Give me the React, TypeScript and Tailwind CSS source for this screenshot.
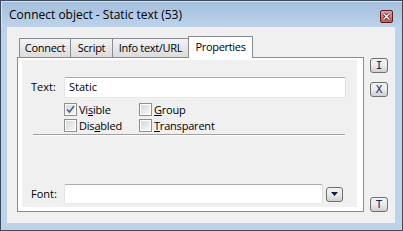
import React from 'react';

const ui = "font-['Segoe_UI','Open_Sans',sans-serif]";

function SideButton({ letter }: { letter: string }) {
    return (
        <div className="w-[18px] h-[15px] rounded-[3px] border border-[#707070] bg-gradient-to-b from-[#f2f2f2] via-[#ebebeb] to-[#cfcfcf] flex items-center justify-center text-[11px] leading-none text-[#1a2a5a] font-['DejaVu_Sans_Mono',monospace]">
            {letter}
        </div>
    );
}

function CheckBox({ checked, pre, key_, post }: { checked?: boolean; pre: string; key_: string; post: string }) {
    return (
        <div className="flex items-center gap-[2px] h-[16px]">
            <div className="w-[13px] h-[13px] border border-[#8e8f8f] bg-white p-px">
                <div className="w-full h-full bg-gradient-to-br from-[#d8d8d8] to-[#f6f6f6] flex items-center justify-center">
                    {checked && (
                        <svg width="9" height="9" viewBox="0 0 9 9">
                            <path d="M1 4.5 L3.5 7 L8 1" fill="none" stroke="#4a5e96" strokeWidth="1.6" />
                        </svg>
                    )}
                </div>
            </div>
            <span className="text-[11px] text-black leading-none tracking-[-0.2px]">
                {pre}<span className="underline underline-offset-1">{key_}</span>{post}
            </span>
        </div>
    );
}

const tabs = [
    { label: 'Connect', w: 'w-[52px]' },
    { label: 'Script', w: 'w-[43px]' },
    { label: 'Info text/URL', w: 'w-[77px]' },
];

export default function App() {
    return (
        <div className={`w-[403px] h-[231px] border border-[#3c4a5a] bg-[#bcd3ea] flex flex-col ${ui}`}>
            {/* Title bar */}
            <div className="h-[26px] shrink-0 bg-gradient-to-b from-[#a4bfdc] to-[#bcd3eb] border-t border-l border-[#d5e3f2] flex items-center justify-between pl-[7px] pr-[9px]">
                <span className="text-[12px] text-black pt-[1px]">Connect object - Static text (53)</span>
                <div className="w-[13px] h-[13px] rounded-[2px] border border-[#5b1d1d] bg-gradient-to-b from-[#e8a0a0] to-[#c75454] flex items-center justify-center mt-[3px]">
                    <svg width="9" height="9" viewBox="0 0 9 9">
                        <path d="M1.5 1.5 L7.5 7.5 M7.5 1.5 L1.5 7.5" stroke="#4a1515" strokeWidth="3" />
                        <path d="M1.5 1.5 L7.5 7.5 M7.5 1.5 L1.5 7.5" stroke="#ffffff" strokeWidth="1.5" />
                    </svg>
                </div>
            </div>

            {/* Client area */}
            <div className="mx-[6px] mr-[7px] h-[196px] bg-[#f0f0f0] flex pl-[10px] pt-[9px]">
                {/* Tab control */}
                <div className="w-[347px] flex flex-col">
                    <div className="flex items-end h-[21px] pl-[2px] tracking-[-0.3px]">
                        {tabs.map((t) => (
                            <div
                                key={t.label}
                                className={`${t.w} h-[19px] -mr-px border border-b-0 border-[#898c95] bg-gradient-to-b from-[#f3f3f3] to-[#dcdcdc] flex items-center justify-center text-[11px] text-black`}
                            >
                                {t.label}
                            </div>
                        ))}
                        <div className="w-[65px] h-[22px] -mb-px relative z-10 border border-b-0 border-[#898c95] bg-white flex items-center justify-center text-[11px] text-black">
                            Properties
                        </div>
                    </div>
                    <div className="h-[155px] border border-[#898c95] bg-white pt-[2px] pl-[4px] pr-[6px] pb-[4px]">
                        <div className="h-full bg-[#f0f0f0] flex flex-col">
                            <div className="flex items-center mt-[17px] h-[21px]">
                                <span className="w-[42px] pl-[9px] text-[11px] text-black">Text:</span>
                                <div className="w-[282px] h-[21px] rounded-[2px] border border-[#abadb3] border-l-[#e2e3ea] border-r-[#dbdfe6] border-b-[#e3e9ef] bg-white flex items-center px-[4px] text-[11px] text-black">
                                    Static
                                </div>
                            </div>
                            <div className="flex mt-[3px] pl-[42px]">
                                <div className="w-[75px] flex flex-col">
                                    <CheckBox checked pre="Vi" key_="s" post="ible" />
                                    <CheckBox pre="Dis" key_="a" post="bled" />
                                </div>
                                <div className="flex flex-col">
                                    <CheckBox pre="" key_="G" post="roup" />
                                    <CheckBox pre="" key_="T" post="ransparent" />
                                </div>
                            </div>
                            <div className="ml-[11px] w-[312px] mt-[1px] border-t border-[#a0a0a0] border-b border-b-white" />
                            <div className="flex items-center mt-[48px] h-[20px]">
                                <span className="w-[42px] pl-[9px] text-[11px] text-black">Font:</span>
                                <div className="w-[259px] h-[20px] rounded-[2px] border border-[#abadb3] border-l-[#e2e3ea] border-r-[#dbdfe6] border-b-[#e3e9ef] bg-white" />
                                <div className="ml-[3px] w-[17px] h-[15px] rounded-[3px] border border-[#707070] bg-gradient-to-b from-[#f2f2f2] via-[#ebebeb] to-[#cfcfcf] flex items-center justify-center">
                                    <svg width="7" height="4" viewBox="0 0 7 4">
                                        <path d="M0 0 L7 0 L3.5 4 Z" fill="#0a1a4a" />
                                    </svg>
                                </div>
                            </div>
                        </div>
                    </div>
                </div>

                {/* Side buttons */}
                <div className="ml-[6px] flex flex-col pt-[22px]">
                    <SideButton letter="I" />
                    <div className="mt-[9px]">
                        <SideButton letter="X" />
                    </div>
                    <div className="mt-[100px]">
                        <SideButton letter="T" />
                    </div>
                </div>
            </div>
        </div>
    );
}
